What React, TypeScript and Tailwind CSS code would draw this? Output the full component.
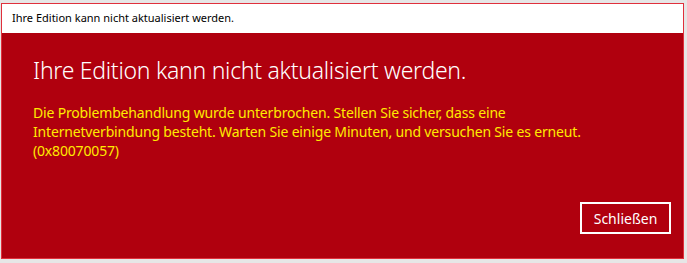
export default function App() {
  return (
    <div className="w-[687px] h-[263px] bg-[#e6e6e6] pt-[3px] pl-[1px]" style={{ fontFamily: '"Noto Sans", sans-serif' }}>
      <div className="w-[683px] h-[256px] border border-[#e0303c] flex flex-col bg-[#b0000e]">
        <div className="h-[29px] bg-white flex items-center pl-[10px] text-[11px] text-black shrink-0">
          Ihre Edition kann nicht aktualisiert werden.
        </div>
        <div className="flex-1 flex flex-col pl-[31px] pr-[12px]">
          <div className="mt-[22px] text-[23px] tracking-[-0.27px] font-light text-white leading-[30px]">
            Ihre Edition kann nicht aktualisiert werden.
          </div>
          <div className="mt-[18px] text-[14px] tracking-[-0.17px] leading-[19px] text-[#ffeb00]">
            Die Problembehandlung wurde unterbrochen. Stellen Sie sicher, dass eine
            <br />
            Internetverbindung besteht. Warten Sie einige Minuten, und versuchen Sie es erneut.
            <br />
            (0x80070057)
          </div>
          <div className="flex-1 flex items-end justify-end pb-[24px]">
            <button className="w-[91px] h-[32px] border-2 border-white text-white text-[14px]">
              Schließen
            </button>
          </div>
        </div>
      </div>
    </div>
  );
}
